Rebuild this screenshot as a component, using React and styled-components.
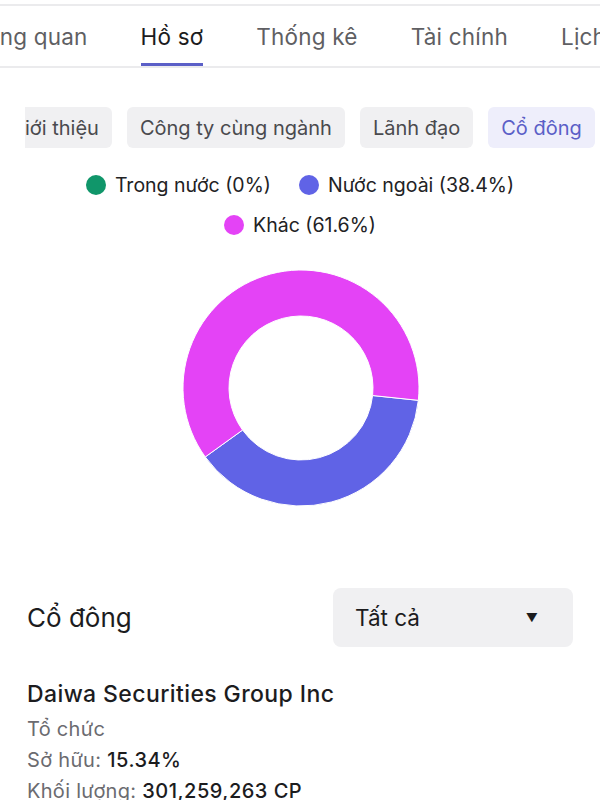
import React from "react";
import styled, { createGlobalStyle } from "styled-components";

const GlobalStyle = createGlobalStyle`
  html, body {
    margin: 0;
    padding: 0;
    background: #ffffff;
  }
  body {
    font-family: Inter, "Noto Sans", "Liberation Sans", sans-serif;
    color: #1c1c1e;
    width: 600px;
    height: 800px;
    overflow: hidden;
  }
`;

const Page = styled.div`
  width: 600px;
  padding-top: 4px;
`;

const TabBar = styled.nav`
  border-top: 2px solid #ebebed;
  border-bottom: 2px solid #ebebed;
  overflow: hidden;
`;

const TabTrack = styled.div`
  display: flex;
  gap: 53px;
  margin-left: ${(p) => p.$offset}px;
  white-space: nowrap;
`;

const Tab = styled.div`
  height: 60px;
  box-sizing: border-box;
  padding-top: 4px;
  display: flex;
  align-items: center;
  font-size: 22.5px;
  letter-spacing: 0.2px;
  color: ${(p) => (p.$active ? "#1c1c1e" : "#5f5f63")};
  border-bottom: 3px solid ${(p) => (p.$active ? "#5b5fc7" : "transparent")};
`;

const ChipScroller = styled.div`
  margin: 39px 0 0 25px;
  overflow: hidden;
`;

const ChipTrack = styled.div`
  display: flex;
  gap: 15px;
  margin-left: ${(p) => p.$offset}px;
  white-space: nowrap;
`;

const Chip = styled.div`
  height: 41px;
  padding: 0 13px;
  display: flex;
  align-items: center;
  border-radius: 6px;
  font-size: 20px;
  background: ${(p) => (p.$active ? "#eeeefb" : "#f0f0f2")};
  color: ${(p) => (p.$active ? "#5b5fc7" : "#4a4a4e")};
`;

const Legend = styled.div`
  display: flex;
  flex-wrap: wrap;
  justify-content: center;
  column-gap: 28px;
  row-gap: 16px;
  padding: 0 24px;
  margin-top: 25px;
`;

const LegendItem = styled.div`
  display: flex;
  align-items: center;
  gap: 9px;
  font-size: 19.5px;
  line-height: 24px;
  color: #222224;
`;

const Dot = styled.span`
  width: 20px;
  height: 20px;
  border-radius: 50%;
  background: ${(p) => p.$color};
`;

const ChartWrap = styled.div`
  display: flex;
  justify-content: center;
  margin-top: 31px;
  padding-left: 2px;
`;

const Section = styled.section`
  padding: 0 27px;
  margin-top: 80px;
`;

const SectionHeader = styled.div`
  display: flex;
  align-items: center;
  justify-content: space-between;
`;

const SectionTitle = styled.h2`
  margin: 0;
  font-size: 26px;
  font-weight: 400;
  color: #1c1c1e;
`;

const Select = styled.div`
  width: 240px;
  height: 59px;
  box-sizing: border-box;
  padding: 0 35px 0 22px;
  border-radius: 8px;
  background: #f0f0f2;
  display: flex;
  align-items: center;
  justify-content: space-between;
  font-size: 22.5px;
  color: #1c1c1e;
`;

const Caret = styled.span`
  font-size: 12px;
  color: #1c1c1e;
`;

const Holder = styled.div`
  margin-top: 32px;
`;

const HolderName = styled.div`
  font-size: 23px;
  line-height: 30px;
  font-weight: 500;
  letter-spacing: 0.4px;
  color: #1c1c1e;
  margin-bottom: 5px;
`;

const Line = styled.div`
  font-size: 20px;
  line-height: 31px;
  letter-spacing: 0.3px;
  color: #6b6b70;
`;

const Value = styled.span`
  font-weight: 500;
  letter-spacing: 0.5px;
  color: #1c1c1e;
`;

const slices = [
  { label: "Trong nước", value: 0, color: "#10966a" },
  { label: "Nước ngoài", value: 38.4, color: "#6063e6" },
  { label: "Khác", value: 61.6, color: "#e443f6" },
];

function arcPath(cx, cy, R, r, a0, a1) {
  const rad = (a) => (a * Math.PI) / 180;
  const p = (rr, a) => [cx + rr * Math.cos(rad(a)), cy + rr * Math.sin(rad(a))];
  const large = a1 - a0 > 180 ? 1 : 0;
  const [x0, y0] = p(R, a0);
  const [x1, y1] = p(R, a1);
  const [x2, y2] = p(r, a1);
  const [x3, y3] = p(r, a0);
  return `M${x0} ${y0} A${R} ${R} 0 ${large} 1 ${x1} ${y1} L${x2} ${y2} A${r} ${r} 0 ${large} 0 ${x3} ${y3} Z`;
}

const Donut = () => {
  let angle = 6;
  return (
    <svg width="240" height="240" viewBox="0 0 240 240">
      {slices
        .filter((s) => s.value > 0)
        .map((s) => {
          const start = angle;
          const end = angle + (s.value / 100) * 360;
          angle = end;
          return (
            <path
              key={s.label}
              d={arcPath(120, 120, 118, 72, start, end)}
              fill={s.color}
              stroke="#ffffff"
              strokeWidth="1"
            />
          );
        })}
    </svg>
  );
};

const tabs = ["Tổng quan", "Hồ sơ", "Thống kê", "Tài chính", "Lịch sử"];
const chips = ["Giới thiệu", "Công ty cùng ngành", "Lãnh đạo", "Cổ đông"];

export default function App() {
  return (
    <Page>
      <GlobalStyle />
      <TabBar>
        <TabTrack $offset={-27}>
          {tabs.map((t) => (
            <Tab key={t} $active={t === "Hồ sơ"}>
              {t}
            </Tab>
          ))}
        </TabTrack>
      </TabBar>

      <ChipScroller>
        <ChipTrack $offset={-28}>
          {chips.map((c) => (
            <Chip key={c} $active={c === "Cổ đông"}>
              {c}
            </Chip>
          ))}
        </ChipTrack>
      </ChipScroller>

      <Legend>
        {slices.map((s) => (
          <LegendItem key={s.label}>
            <Dot $color={s.color} />
            {s.label} ({s.value}%)
          </LegendItem>
        ))}
      </Legend>

      <ChartWrap>
        <Donut />
      </ChartWrap>

      <Section>
        <SectionHeader>
          <SectionTitle>Cổ đông</SectionTitle>
          <Select>
            Tất cả
            <Caret>▼</Caret>
          </Select>
        </SectionHeader>
        <Holder>
          <HolderName>Daiwa Securities Group Inc</HolderName>
          <Line>Tổ chức</Line>
          <Line>
            Sở hữu: <Value>15.34%</Value>
          </Line>
          <Line>
            Khối lượng: <Value>301,259,263 CP</Value>
          </Line>
        </Holder>
      </Section>
    </Page>
  );
}
